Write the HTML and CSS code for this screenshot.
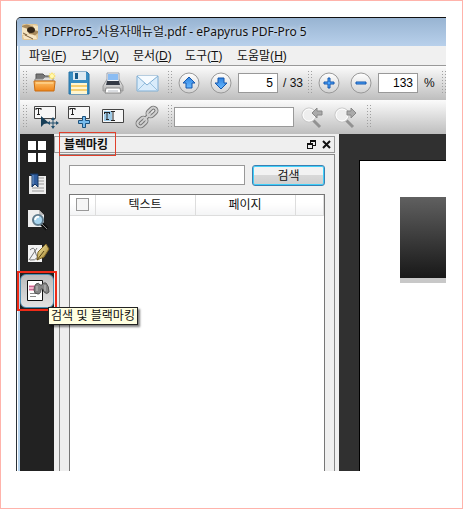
FILE: index.html
```html
<!DOCTYPE html>
<html lang="ko">
<head>
    <meta charset="UTF-8">
    <meta name="viewport" content="width=device-width, initial-scale=1.0">
    <title>PDFPro5_사용자매뉴얼.pdf - ePapyrus PDF-Pro 5</title>
    <link rel="stylesheet" href="styles.css">
</head>
<body>
    <svg width="0" height="0" class="defs">
        <defs>
            <linearGradient id="folder" x2="0" y2="1"><stop stop-color="#ffc36b"/><stop offset="1" stop-color="#ee8419"/></linearGradient>
            <linearGradient id="steel" x2="0" y2="1"><stop stop-color="#fff"/><stop offset="1" stop-color="#aaa"/></linearGradient>
            <linearGradient id="ball" x2="0" y2="1"><stop stop-color="#fff"/><stop offset="1" stop-color="#d2d2d2"/></linearGradient>
            <linearGradient id="blue" x2="0" y2="1"><stop stop-color="#2f83e0"/><stop offset="1" stop-color="#69b9ff"/></linearGradient>
            <linearGradient id="gold" x2="1" y2="1"><stop stop-color="#fbefb0"/><stop offset="1" stop-color="#9b7a22"/></linearGradient>
        </defs>
    </svg>

    <div class="window">
        <div class="titlebar">
            <svg width="16" height="16" viewBox="0 0 16 16">
                <rect width="16" height="16" rx="2" fill="#e2c795"/>
                <path d="M0 2q5-3 9 0l7 2v5l-5 4H4L0 9z" fill="#a88a5c"/>
                <path d="M0 3l6 2 1 5-7 1zM11 1l5 1v5l-4-1z" fill="#f4e4c0"/>
                <ellipse cx="9" cy="6" rx="4" ry="3" fill="#352717"/>
                <path d="M1 12q6-4 13 0l1 3H2z" fill="#f7e6c4"/>
                <path d="M3 11l8 4M1 9l4 2" stroke="#7a603c" fill="none"/>
            </svg>
            <h1>PDFPro5_사용자매뉴얼.pdf - ePapyrus PDF-Pro 5</h1>
        </div>

        <nav class="menu">
            <a href="#">파일(<u>F</u>)</a>
            <a href="#">보기(<u>V</u>)</a>
            <a href="#">문서(<u>D</u>)</a>
            <a href="#">도구(<u>T</u>)</a>
            <a href="#">도움말(<u>H</u>)</a>
        </nav>

        <div class="toolbar">
            <div class="grip"></div>
            <div class="tools">
                <button type="button" aria-label="열기">
                    <svg width="24" height="24" viewBox="0 0 24 24">
                        <path d="M3 5V3h7l2 2h7v7H3z" fill="#777" stroke="#555"/>
                        <path d="M2 8h8l2-2h8v4H2z" fill="#ddd" stroke="#888"/>
                        <path d="M1 10h21v1l-1 9H2z" fill="url(#folder)" stroke="#c96d13"/>
                        <path d="M3 12h17" stroke="#ffe0a5"/>
                        <path d="M19 1l1 2 2-1-1 2 2 1-2 1 1 2-2-1-1 2-1-2-2 1 1-2-2-1 2-1-1-2 2 1z" fill="#ffdf51"/>
                        <circle cx="19" cy="5" r="2" fill="#fff9b5"/>
                    </svg>
                </button>
                <button type="button" aria-label="저장">
                    <svg width="24" height="24" viewBox="0 0 24 24">
                        <path d="M2 1h18l2 2v20H2z" fill="#378dc2" stroke="#2773a6"/>
                        <path d="M6 1h13v8H6z" fill="#dceaf2"/>
                        <path d="M8 2h3v6H8z" fill="#185b8a"/>
                        <path d="M4 12h16v11H4z" fill="#fff6d1"/>
                        <path d="M4 14h16v2H4zM4 18h16v2H4z" fill="#f7cf70"/>
                    </svg>
                </button>
                <button type="button" aria-label="인쇄">
                    <svg width="24" height="24" viewBox="0 0 24 24">
                        <path d="M5 10l2-3h10l2 3 3 5v5H2v-5z" fill="url(#steel)" stroke="#999"/>
                        <path d="M6 2h12v9H6z" fill="#f5f7fa" stroke="#9aa2b0"/>
                        <path d="M7 3h10v6H7z" fill="#8abcf3"/>
                        <path d="M6 10h12l1 4H5z" fill="#343a45"/>
                        <path d="M5 17h14l1 5H4z" fill="#fff" stroke="#888"/>
                        <path d="M7 20h10" stroke="#b5bac2"/>
                    </svg>
                </button>
                <button type="button" aria-label="메일">
                    <svg width="24" height="24" viewBox="0 0 24 24">
                        <path d="M2 5h21v15H2z" fill="#d9ecfb" stroke="#80afd4"/>
                        <path d="M2 20l8-8M23 20l-8-8" stroke="#99c1df"/>
                        <path d="M2 5l10 9L23 5" fill="#f6fbff" stroke="#80afd4"/>
                    </svg>
                </button>
            </div>
            <div class="grip"></div>
            <div class="tools round">
                <button type="button" aria-label="이전 페이지">
                    <svg width="22" height="22" viewBox="0 0 22 22"><circle cx="11" cy="11" r="10" fill="url(#ball)" stroke="#999"/><path d="M11 5l6 6h-3v5H8v-5H5z" fill="url(#blue)" stroke="#1557ad"/></svg>
                </button>
                <button type="button" aria-label="다음 페이지">
                    <svg width="22" height="22" viewBox="0 0 22 22"><circle cx="11" cy="11" r="10" fill="url(#ball)" stroke="#999"/><path d="M11 17l6-6h-3V6H8v5H5z" fill="url(#blue)" stroke="#1557ad"/></svg>
                </button>
            </div>
            <input class="number" type="text" value="5" aria-label="페이지">
            <span class="total">/ 33</span>
            <div class="grip"></div>
            <div class="tools round">
                <button type="button" aria-label="확대">
                    <svg width="22" height="22" viewBox="0 0 22 22"><circle cx="11" cy="11" r="10" fill="url(#ball)" stroke="#999"/><path d="M10 6h2v4h4v2h-4v4h-2v-4H6v-2h4z" fill="#4da6ff" stroke="#1557ad"/></svg>
                </button>
                <button type="button" aria-label="축소">
                    <svg width="22" height="22" viewBox="0 0 22 22"><circle cx="11" cy="11" r="10" fill="url(#ball)" stroke="#999"/><path d="M6 10h10v2H6z" fill="#4da6ff" stroke="#1557ad"/></svg>
                </button>
            </div>
            <input class="number" type="text" value="133" aria-label="배율">
            <span class="percent">%</span>
            <div class="grip last"></div>
        </div>

        <div class="toolbar">
            <div class="grip"></div>
            <div class="tools">
                <button type="button" aria-label="텍스트 선택">
                    <svg width="24" height="24" viewBox="0 0 24 24">
                        <path d="M1.500 1.500h21v12h-21z" fill="#f7f7f7" stroke="#444"/>
                        <path d="M3 3v2M3 3.500h5M8 3v2M5.500 3v6M4 9.500h3" stroke="#222" fill="none"/>
                        <path d="M8 11v11l3-3 5-1z" fill="#173e57"/>
                        <path d="M20 13v10M15 18h10" stroke="#24516f"/>
                        <path d="M20 12l2 3h-4zM20 24l2-3h-4zM14 18l3-2v4zM26 18l-3-2v4z" fill="#24516f"/>
                    </svg>
                </button>
                <button type="button" aria-label="텍스트 추가">
                    <svg width="24" height="24" viewBox="0 0 24 24">
                        <path d="M1.500 1.500h21v12h-21z" fill="#f7f7f7" stroke="#444"/>
                        <path d="M3 3v2M3 3.500h5M8 3v2M5.500 3v6M4 9.500h3" stroke="#222" fill="none"/>
                        <path d="M15.500 11.500h3v4h4v3h-4v4h-3v-4h-4v-3h4z" fill="#78bced" stroke="#1c527e"/>
                    </svg>
                </button>
                <button type="button" aria-label="텍스트 편집">
                    <svg width="24" height="24" viewBox="0 0 24 24">
                        <path d="M1.500 4.500h21v13h-21z" fill="#f7f7f7" stroke="#444"/>
                        <path d="M3 6h8v10H3z" fill="#9fcbe8"/>
                        <path d="M3.500 7v2M3 7.500h6M8.500 7v2M6 7v8M5 14.500h3M10 6.500h4M12 7v8M10 15.500h4" stroke="#222" fill="none"/>
                    </svg>
                </button>
                <button type="button" aria-label="링크">
                    <svg width="24" height="24" viewBox="0 0 24 24">
                        <g fill="none" stroke="#777" stroke-width="4"><rect x="12" y="4" width="10" height="6" rx="3" transform="rotate(-43 17 7)"/><rect x="2" y="14" width="10" height="6" rx="3" transform="rotate(-43 7 17)"/><path d="M8 16l8-8"/></g>
                        <g fill="none" stroke="#d0d0d0" stroke-width="2"><rect x="12" y="4" width="10" height="6" rx="3" transform="rotate(-43 17 7)"/><rect x="2" y="14" width="10" height="6" rx="3" transform="rotate(-43 7 17)"/><path d="M8 16l8-8"/></g>
                    </svg>
                </button>
            </div>
            <div class="grip"></div>
            <input class="find" type="text" aria-label="찾기">
            <div class="tools">
                <button type="button" aria-label="이전 찾기">
                    <svg width="24" height="24" viewBox="0 0 24 24">
                        <path d="M13 15l7 7" stroke="#929292" stroke-width="3"/>
                        <circle cx="9" cy="10" r="7" fill="#eee" stroke="#c4c4c4"/><circle cx="9" cy="10" r="6" fill="none" stroke="#fff"/>
                        <path d="M12 8l5-5v3h5v4h-5v3z" fill="#aaa" stroke="#888"/>
                    </svg>
                </button>
                <button type="button" aria-label="다음 찾기">
                    <svg width="24" height="24" viewBox="0 0 24 24">
                        <path d="M12 15l7 7" stroke="#929292" stroke-width="3"/>
                        <circle cx="8" cy="10" r="7" fill="#eee" stroke="#c4c4c4"/><circle cx="8" cy="10" r="6" fill="none" stroke="#fff"/>
                        <path d="M22 8l-5-5v3h-4v4h4v3z" fill="#aaa" stroke="#888"/>
                    </svg>
                </button>
            </div>
            <div class="grip"></div>
        </div>

        <div class="workspace">
            <div class="sidebar">
                <button type="button" aria-label="축소판">
                    <svg width="24" height="24" viewBox="0 0 24 24"><path d="M3 2h8v9H3zM13 2h8v9h-8zM3 14h8v9H3zM13 14h8v9h-8z" fill="#fff"/></svg>
                </button>
                <button type="button" aria-label="책갈피">
                    <svg width="24" height="24" viewBox="0 0 24 24">
                        <path d="M4 3h17v18H4z" fill="#ededed"/><path d="M13 5h6M13 8h6M13 11h6M7 15h12M7 18h12" stroke="#999"/>
                        <path d="M5 1h8v13l-3-3-3 3V3z" fill="#315e9f" stroke="#173660"/><path d="M8 2v9" stroke="#7599c9"/>
                    </svg>
                </button>
                <button type="button" aria-label="검색">
                    <svg width="24" height="24" viewBox="0 0 24 24">
                        <path d="M3 3h11l5 5v12H3z" fill="#eee"/><path d="M14 3v5h5" fill="#bbb"/>
                        <path d="M16 16l6 6" stroke="#111" stroke-width="4"/><path d="M16 16l6 6" stroke="#888"/>
                        <circle cx="13" cy="13" r="5" fill="#a7d5ef" stroke="#607b8c" stroke-width="2"/><path d="M10 13q1-4 4-3" stroke="#fff" stroke-width="2" fill="none"/>
                    </svg>
                </button>
                <button type="button" aria-label="서명">
                    <svg width="24" height="24" viewBox="0 0 24 24">
                        <path d="M3 4h14v17H3z" fill="#f2f2f2"/><path d="M5 9q4-4 5 1t4 8M12 7L4 19M5 19q5 1 8-3" stroke="#777" fill="none"/>
                        <path d="M12 19l1-8 8-8 3 5-5 8z" fill="url(#gold)" stroke="#806627"/><path d="M12 19l7-9" stroke="#564216"/>
                    </svg>
                </button>
                <div class="current">
                    <button type="button" class="active" aria-describedby="tip" aria-label="검색 및 블랙마킹">
                        <svg width="24" height="24" viewBox="0 0 24 24">
                            <path d="M2.500 1.500h15v20h-15z" fill="#fff" stroke="#111"/>
                            <path d="M4 6h8v6H4z" fill="#f7b3cc"/><path d="M4 7.500h8M4 10.500h8" stroke="#c76a93"/><path d="M5 14.500h9M5 17.500h6" stroke="#888"/>
                            <path d="M11 5q3-2 4 1h2q1-3 4-2 3 3 3 9-2 3-5 0l-1-3h-2q0 5-3 5-4 0-4-4 0-4 2-6z" fill="#858585" stroke="#555"/>
                            <path d="M12 7v5M20 6v6" stroke="#c4c4c4"/>
                        </svg>
                    </button>
                    <div class="tooltip" id="tip" role="tooltip">검색 및 블랙마킹</div>
                </div>
            </div>

            <div class="dock">
                <div class="dock-title">
                    <h2>블렉마킹</h2>
                    <button type="button" aria-label="분리">
                        <svg width="9" height="9" viewBox="0 0 9 9"><path d="M3 0h6v6H6V5h2V2H4v1H3zM0 3h6v6H0zM1 5v3h4V5z" fill="#111" fill-rule="evenodd"/></svg>
                    </button>
                    <button type="button" aria-label="닫기">
                        <svg width="9" height="9" viewBox="0 0 9 9"><path d="M1 1l7 7M8 1L1 8" stroke="#111" stroke-width="2"/></svg>
                    </button>
                </div>
                <div class="dock-body">
                    <form class="search">
                        <input type="text" aria-label="검색어">
                        <button type="button">검색</button>
                    </form>
                    <div class="results">
                        <table>
                            <thead>
                                <tr>
                                    <th class="col-check"><input type="checkbox" aria-label="모두 선택"></th>
                                    <th class="col-text">텍스트</th>
                                    <th class="col-page">페이지</th>
                                    <th></th>
                                </tr>
                            </thead>
                        </table>
                    </div>
                </div>
            </div>

            <div class="viewer">
                <div class="page">
                    <div class="page-block"></div>
                </div>
            </div>
        </div>
    </div>
</body>
</html>
```

FILE: styles.css
```css
* {
    box-sizing: border-box;
}
body {
    margin: 0;
    min-height: 100vh;
    display: flex;
    border: 1px solid #ffb3ab;
    padding: 16px 16px 37px 15px;
    background: #fff;
    color: #111;
    font: 12px/16px "Liberation Sans", "Noto Sans CJK KR", sans-serif;
}
h1, h2 {
    margin: 0;
}
button {
    border: 0;
    padding: 0;
    background: none;
    font: inherit;
    color: inherit;
}
svg {
    display: block;
    overflow: visible;
}
.defs {
    position: absolute;
}
.window {
    flex: 1;
    min-width: 0;
    display: flex;
    flex-direction: column;
    border-top: 1px solid #111;
    border-left: 1px solid #2b3238;
    border-top-left-radius: 5px;
    overflow: hidden;
    background: linear-gradient(to right, #fff 0, #fff 1px, #b9d5ee 1px, #b9d5ee 3px, #efefef 3px);
}
.titlebar {
    height: 28px;
    display: flex;
    align-items: center;
    gap: 6px;
    padding-left: 5px;
    background: linear-gradient(#98b4d2, #b8d0eb);
}
.titlebar h1 {
    font: 12px/20px "Noto Sans", "Noto Sans CJK KR", sans-serif;
    white-space: nowrap;
    text-shadow: 0 0 4px #fff;
}

/* menu */
.menu {
    height: 19px;
    margin-left: 3px;
    display: flex;
    padding-left: 9px;
    background: #f0f0f0;
}
.menu a {
    width: 52px;
    color: #111;
    line-height: 20px;
    text-decoration: none;
    white-space: nowrap;
}

/* toolbars */
.toolbar {
    height: 34px;
    margin-left: 3px;
    display: flex;
    align-items: center;
    padding-left: 3px;
    overflow: hidden;
    background: linear-gradient(#fbfbfb, #bebebe);
}
.menu + .toolbar {
    height: 35px;
    border-top: 1px solid #999;
}
.grip {
    flex: none;
    width: 5px;
    height: 24px;
    background: conic-gradient(at 1px 1px, transparent 75%, #a0a0a0 75%) 0 0 / 3px 3px;
}
.tools {
    display: flex;
    padding-right: 4px;
}
.tools button {
    width: 34px;
    display: flex;
    justify-content: center;
}
.tools.round {
    padding-right: 1px;
}
.tools.round button {
    width: 32px;
}
.toolbar input {
    height: 20px;
    border: 1px solid #999;
    padding: 0 4px;
    background: #fff;
    font: inherit;
}
.toolbar .number {
    width: 40px;
    text-align: right;
}
.total {
    width: 30px;
    padding-left: 5px;
    white-space: nowrap;
}
.percent {
    padding-left: 6px;
}
.grip.last {
    margin-left: auto;
    width: 4px;
}
.toolbar .find {
    width: 120px;
    margin: 0 1px;
}

/* workspace */
.workspace {
    flex: 1;
    display: flex;
    margin-left: 3px;
}
.sidebar {
    width: 34px;
    flex: none;
    display: flex;
    flex-direction: column;
    background: #222;
}
.sidebar button {
    width: 34px;
    height: 34px;
    display: flex;
    align-items: center;
    justify-content: center;
}
.current {
    position: relative;
    margin-top: 4px;
    outline: 2px solid #ef2b18;
    outline-offset: 1px;
}
.sidebar .active {
    border: 1px solid #4f91b5;
    border-radius: 6px;
    background: linear-gradient(#bbb, #e2e2e2);
}
.tooltip {
    position: absolute;
    top: 33px;
    left: 28px;
    z-index: 1;
    border: 1px solid #222;
    padding: 0 2px;
    background: #ffffe1;
    box-shadow: 2px 2px 2px rgba(0,0,0,0.5);
    white-space: nowrap;
}
.dock {
    width: 285px;
    min-width: 0;
    flex: none;
    display: flex;
    flex-direction: column;
    padding: 2px 4px 0 0;
    background: #efefef;
}
.dock-title {
    height: 17px;
    display: flex;
    align-items: center;
    gap: 6px;
    border: 1px solid #999;
    padding-right: 3px;
}
.dock-title h2 {
    position: relative;
    margin-right: auto;
    padding-left: 9px;
    font-size: 12px;
    line-height: 16px;
}
.dock-title h2::after {
    content: "";
    position: absolute;
    inset: -5px -8px -3px 4px;
    border: 1px solid #e0402c;
}
.dock-body {
    flex: 1;
    display: flex;
    flex-direction: column;
    gap: 8px;
    margin: 1px 0 0 5px;
    border: 1px solid #888;
    border-bottom: 0;
    padding: 10px 9px 0;
}
.search {
    display: flex;
    gap: 7px;
}
.search input {
    flex: 1;
    min-width: 0;
    height: 20px;
    border: 1px solid #999;
    padding: 0 4px;
    background: #fff;
}
.search button {
    width: 73px;
    height: 21px;
    border: 1px solid #3c7fb1;
    border-radius: 3px;
    background: linear-gradient(#f2f2f2 50%, #d8d8d8 50%, #cfcfcf);
    box-shadow: inset 0 0 0 1px #40d0fa;
}
.results {
    flex: 1;
    border: 1px solid #777;
    border-bottom: 0;
    background: #fff;
}
.results table {
    width: 100%;
    table-layout: fixed;
    border-collapse: collapse;
}
.results th {
    height: 20px;
    border-right: 1px solid #ddd;
    border-bottom: 1px solid #ddd;
    padding: 0;
    background: linear-gradient(#fff 40%, #f3f4f5);
    font-weight: normal;
}
.col-check {
    width: 25px;
}
.col-text, .col-page {
    width: 100px;
}
.results input {
    appearance: none;
    display: block;
    width: 13px;
    height: 13px;
    margin: 0 auto;
    border: 1px solid #999;
    background: #f6f6f6;
}
.viewer {
    flex: 1;
    display: flex;
    padding: 26px 0 0 20px;
    background: #303030;
}
.page {
    flex: 1;
    border-top: 1px solid #000;
    border-left: 1px solid #000;
    padding: 36px 0 0 40px;
    background: #fff;
}
.page-block {
    height: 86px;
    border-bottom: 5px solid #c8c8c8;
    background: linear-gradient(#606060, #181818);
}
```
